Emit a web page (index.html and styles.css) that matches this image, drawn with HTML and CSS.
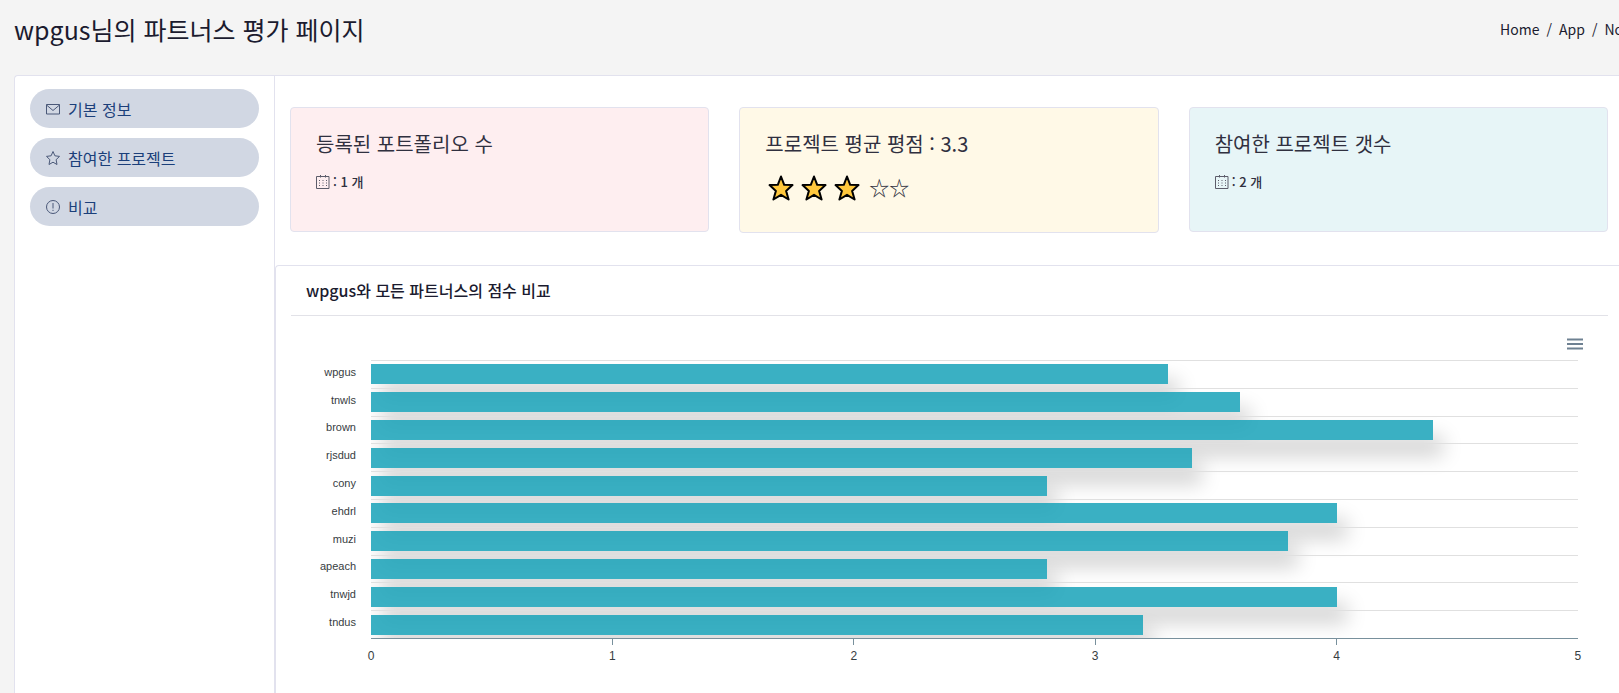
FILE: index.html
```html
<!DOCTYPE html>
<html lang="ko">
<head>
<meta charset="utf-8">
<title>파트너스 평가 페이지</title>
<link rel="stylesheet" href="styles.css">
</head>
<body>
<div class="page">
  <header class="page-header">
    <h1 class="page-title">wpgus님의 파트너스 평가 페이지</h1>
    <nav class="breadcrumb" aria-label="breadcrumb">
      <a href="#">Home</a><span>/</span><a href="#">App</a><span>/</span><a href="#">No</a>
    </nav>
  </header>
  <div class="panel">
    <nav class="sidebar">
      <a class="pill" href="#info">
        <svg class="pill-icon" viewBox="0 0 14 14"><path d="M.5 2.500h13v9.500h-13zM.5 3l6.500 5.500L13.500 3"/></svg>
        기본 정보
      </a>
      <a class="pill" href="#projects">
        <svg class="pill-icon" viewBox="0 0 14 14"><path d="M7 .5l1.900 4.300 4.600.6-3.400 3.300.9 4.800L7 11.200l-4 2.300.9-4.800L.5 5.400l4.600-.6z"/></svg>
        참여한 프로젝트
      </a>
      <a class="pill" href="#compare">
        <svg class="pill-icon" viewBox="0 0 14 14"><circle cx="7" cy="7" r="6.500"/><path d="M7 3v5.500M7 9.800v1.200"/></svg>
        비교
      </a>
    </nav>
    <main class="content">
      <section class="stats">
        <article class="stat stat-pink">
          <h2 class="stat-title">등록된 포트폴리오 수</h2>
          <p class="stat-count"><svg class="calendar" viewBox="0 0 14 14"><path d="M.5 1.500h12.500v12H.5zM4.500 0v2.500M9.500 0v2.500"/><path d="M3 5.500h1M6.500 5.500h1M10 5.500h1M3 8h1M6.500 8h1M10 8h1M3 10.500h1M6.500 10.500h1M10 10.500h1"/></svg> : 1 개</p>
        </article>
        <article class="stat stat-yellow">
          <h2 class="stat-title">프로젝트 평균 평점 : 3.3</h2>
          <div class="stars">
            <svg class="star" viewBox="0 0 26 26"><path d="M13 1.500l3.200 8.300 8.300.3-6.400 5.800 2.500 8.600L13 19.800l-7.600 4.700 2.500-8.600L1.500 10.100l8.300-.3z"/></svg>
            <svg class="star" viewBox="0 0 26 26"><path d="M13 1.500l3.200 8.300 8.300.3-6.400 5.800 2.500 8.600L13 19.800l-7.600 4.700 2.500-8.600L1.500 10.100l8.300-.3z"/></svg>
            <svg class="star" viewBox="0 0 26 26"><path d="M13 1.500l3.200 8.300 8.300.3-6.400 5.800 2.500 8.600L13 19.800l-7.600 4.700 2.500-8.600L1.500 10.100l8.300-.3z"/></svg>
            <span class="stars-empty">☆☆</span>
          </div>
        </article>
        <article class="stat stat-teal">
          <h2 class="stat-title">참여한 프로젝트 갯수</h2>
          <p class="stat-count"><svg class="calendar" viewBox="0 0 14 14"><path d="M.5 1.500h12.500v12H.5zM4.500 0v2.500M9.500 0v2.500"/><path d="M3 5.500h1M6.500 5.500h1M10 5.500h1M3 8h1M6.500 8h1M10 8h1M3 10.500h1M6.500 10.500h1M10 10.500h1"/></svg> : 2 개</p>
        </article>
      </section>
      <section class="chart-card">
        <h2 class="chart-title">wpgus와 모든 파트너스의 점수 비교</h2>
        <div class="toolbar">
          <button class="menu" type="button" aria-label="Menu"><svg class="menu-icon" viewBox="0 0 16 12"><path d="M0 1.500h16M0 6h16M0 10.500h16"/></svg></button>
        </div>
        <div class="chart">
          <div class="names">
            <span>wpgus</span><span>tnwls</span><span>brown</span><span>rjsdud</span><span>cony</span><span>ehdrl</span><span>muzi</span><span>apeach</span><span>tnwjd</span><span>tndus</span>
          </div>
          <div class="plot">
            <div class="row"><div class="bar" style="width:66%"></div></div>
            <div class="row"><div class="bar" style="width:72%"></div></div>
            <div class="row"><div class="bar" style="width:88%"></div></div>
            <div class="row"><div class="bar" style="width:68%"></div></div>
            <div class="row"><div class="bar" style="width:56%"></div></div>
            <div class="row"><div class="bar" style="width:80%"></div></div>
            <div class="row"><div class="bar" style="width:76%"></div></div>
            <div class="row"><div class="bar" style="width:56%"></div></div>
            <div class="row"><div class="bar" style="width:80%"></div></div>
            <div class="row"><div class="bar" style="width:64%"></div></div>
          </div>
          <div class="axis">
            <span class="tick first">0</span><span class="tick">1</span><span class="tick">2</span><span class="tick">3</span><span class="tick">4</span><span class="tick last">5</span>
          </div>
        </div>
      </section>
    </main>
  </div>
</div>
</body>
</html>
```
FILE: styles.css
```css
* { box-sizing: border-box; }

body {
  margin: 0;
  overflow-x: hidden;
  background: #f4f4f4;
  color: #1b1b2f;
  font-family: "Noto Sans CJK KR", "Noto Sans", sans-serif;
}

h1, h2, p { margin: 0; }

a { color: inherit; text-decoration: none; }

svg { flex: none; fill: none; stroke: currentColor; }

.page {
  display: flex;
  flex-direction: column;
  min-height: 100vh;
  margin-right: -4px;
  padding-left: 14px;
}

.page-header {
  display: flex;
  align-items: flex-start;
  justify-content: space-between;
  height: 75px;
  padding-top: 10px;
}

.page-title { font-size: 25px; font-weight: 400; line-height: 38px; }

.breadcrumb {
  display: flex;
  gap: 7px;
  font-size: 14px;
  line-height: 38px;
}

.panel {
  display: flex;
  flex: 1;
  background: #fff;
  border: 1px solid #e2e2ee;
  border-width: 1px 0 0 1px;
  border-radius: 4px 0 0 0;
}

.sidebar {
  display: flex;
  flex: none;
  flex-direction: column;
  gap: 10px;
  width: 260px;
  padding: 13px 15px;
  border-right: 1px solid #e2e2ee;
}

.pill {
  display: flex;
  align-items: center;
  gap: 8px;
  height: 39px;
  padding: 0 16px;
  border-radius: 20px;
  background: #d1d7e3;
  color: #1b3f7a;
  font-size: 16px;
}

.pill-icon { width: 14px; height: 14px; color: #4a5878; }

.content {
  display: flex;
  flex: 1;
  flex-direction: column;
  min-width: 0;
}

.stats {
  display: grid;
  grid-template-columns: repeat(3, 1fr);
  align-items: start;
  gap: 30px;
  padding: 31px 15px 32px;
}

.stat {
  min-height: 125px;
  padding: 20px 25px;
  border: 1px solid #e2e2ee;
  border-radius: 4px;
  color: #30303f;
}

.stat-pink { background: #feeef0; }
.stat-yellow { min-height: 126px; background: #fff9e7; }
.stat-teal { background: #e7f5f7; }

.stat-title { font-size: 20px; font-weight: 400; line-height: 32px; }

.stat-count {
  display: flex;
  align-items: center;
  gap: 3px;
  margin-top: 12px;
  font-size: 13px;
  font-weight: 500;
  line-height: 20px;
}

.calendar { width: 14px; height: 14px; color: #5c5c6a; }

.stars {
  display: flex;
  align-items: center;
  gap: 7px;
  height: 32px;
  margin-top: 12px;
  padding-left: 3px;
}

.star {
  width: 26px;
  height: 26px;
  fill: #ffc83d;
  stroke: #000;
  stroke-width: 2;
  stroke-linejoin: round;
}

.stars-empty { padding-left: 2px; font-size: 20px; line-height: 30px; }

.chart-card {
  flex: 1;
  border: 1px solid #e2e2ee;
  border-width: 1px 0 0 1px;
  border-radius: 4px 0 0 0;
  padding: 0 15px;
}

.chart-title {
  padding: 12px 15px 13px;
  border-bottom: 1px solid #e2e2e8;
  font-size: 16px;
  font-weight: 500;
  line-height: 24px;
}

.toolbar {
  display: flex;
  justify-content: flex-end;
  height: 44px;
  padding: 22px 25px 0 0;
}

.menu {
  display: flex;
  height: 12px;
  padding: 0;
  border: 0;
  background: none;
  color: #6e8192;
}

.menu-icon { width: 16px; height: 12px; stroke-width: 2; }

.chart {
  display: grid;
  grid-template-columns: 65px 1fr;
  column-gap: 15px;
  padding-right: 30px;
  color: #373d3f;
  font-family: "Liberation Sans", Arial, sans-serif;
}

.names {
  display: grid;
  grid-auto-rows: 1fr;
  align-items: center;
  height: 278px;
  font-size: 11px;
  line-height: 13px;
  text-align: right;
}

.names span { padding-bottom: 3px; }

.plot {
  display: grid;
  grid-auto-rows: 1fr;
  height: 279px;
  overflow: hidden;
  border-bottom: 1px solid #78909c;
}

.row { display: flex; align-items: center; border-top: 1px solid #e0e0e0; }

.bar {
  height: 20px;
  background: rgba(23, 162, 184, 0.85);
  box-shadow: 10px 16px 20px rgba(0, 0, 0, 0.18);
}

.axis {
  display: flex;
  grid-column: 2;
  justify-content: space-between;
  font-size: 12px;
  line-height: 14px;
}

.tick {
  display: flex;
  flex-direction: column;
  align-items: center;
  gap: 4px;
  width: 0;
}

.tick::before {
  content: "";
  width: 1px;
  height: 6px;
  background: #78909c;
}

.first::before, .last::before { background: none; }
```
